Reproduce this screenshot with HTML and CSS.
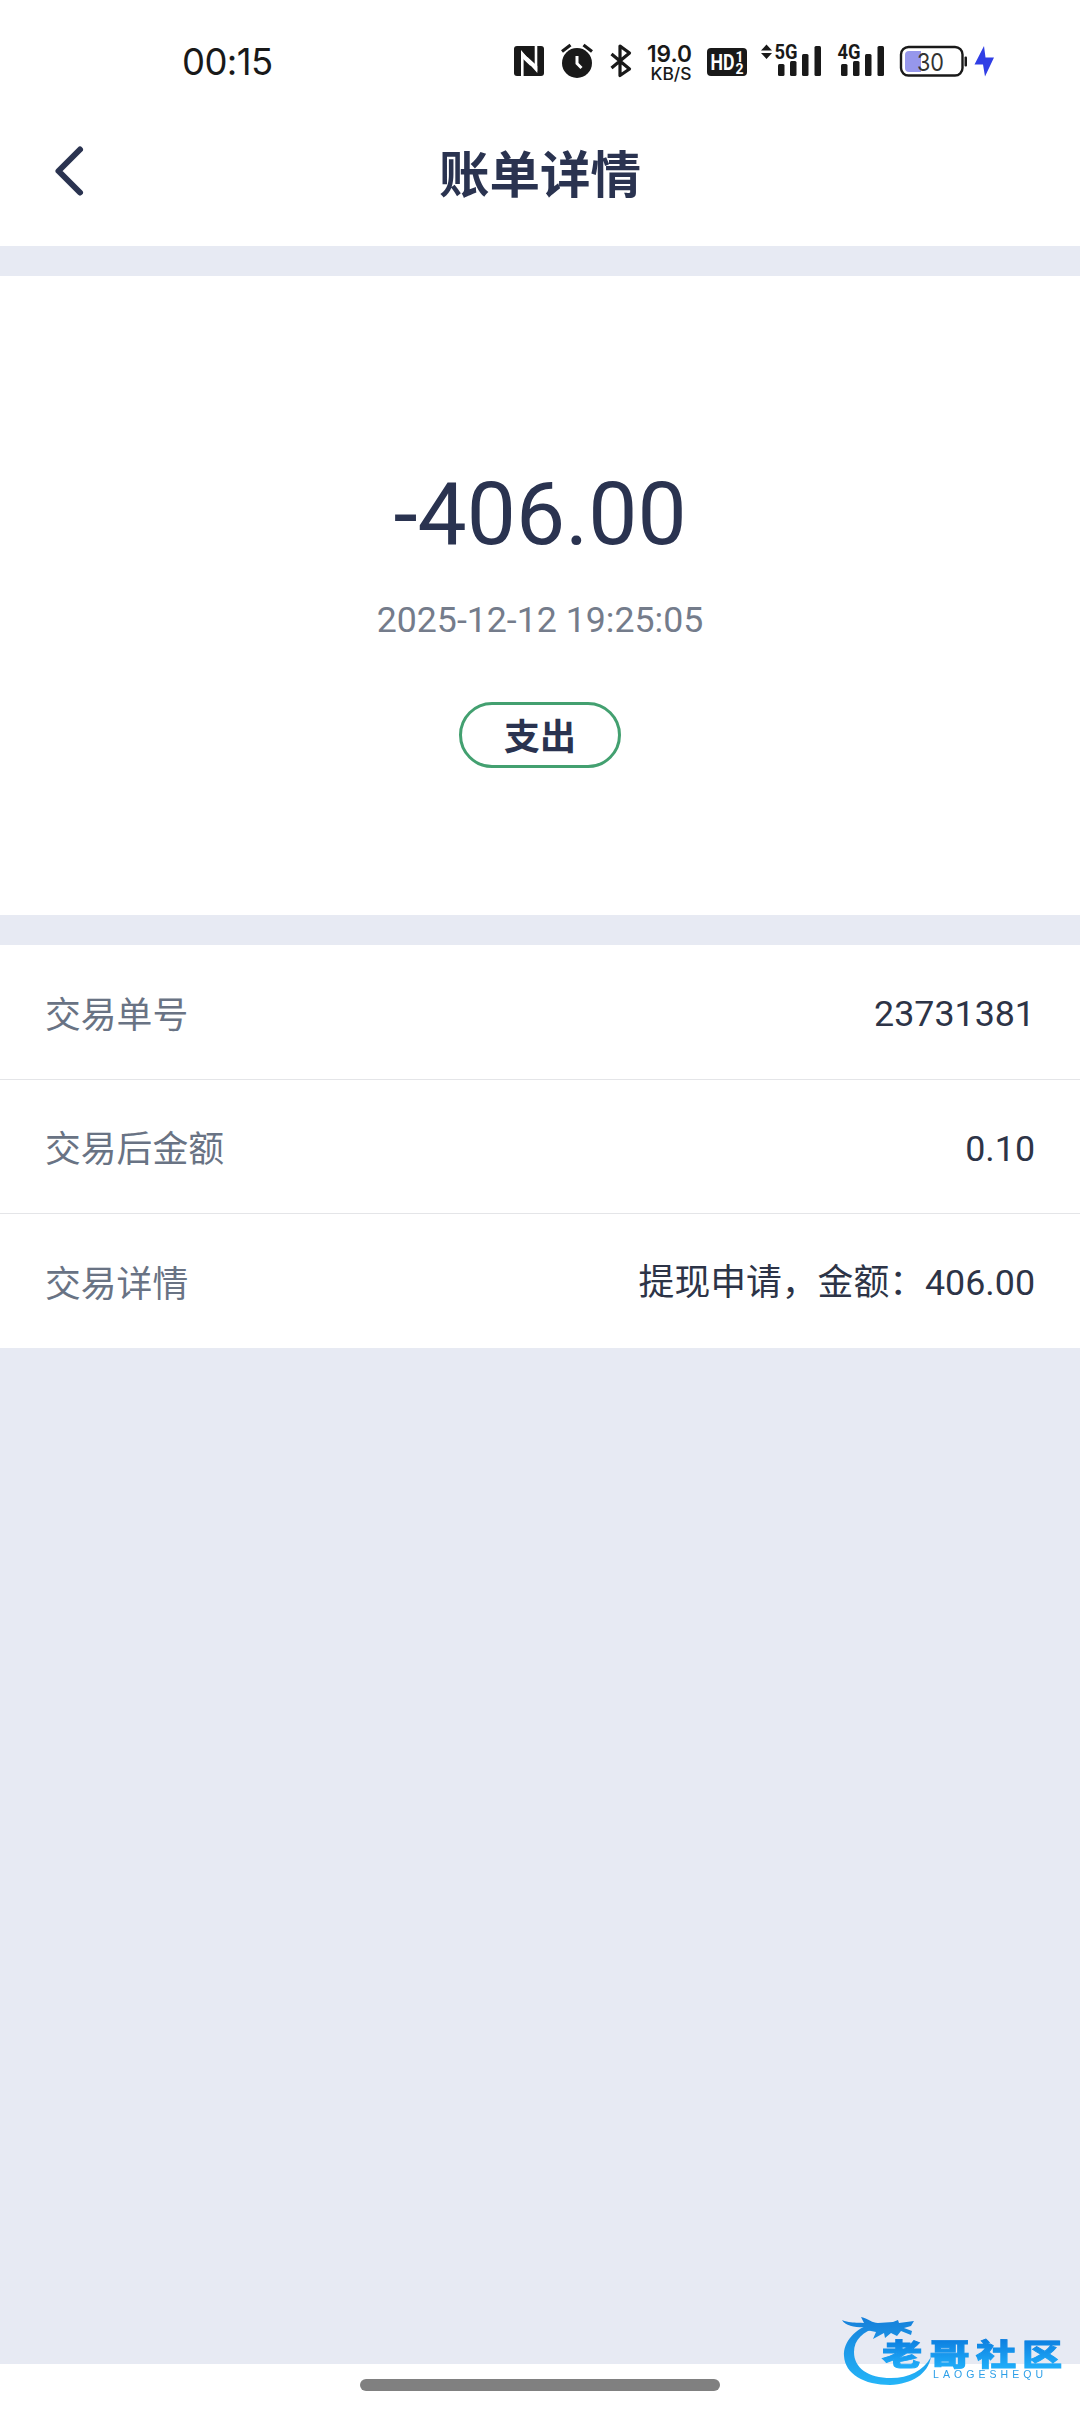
FILE: index.html
```html
<!DOCTYPE html>
<html lang="zh-CN">
<head>
<meta charset="utf-8">
<title>账单详情</title>
<link rel="stylesheet" href="styles.css">
</head>
<body>
<div class="screen">
  <header class="top">
    <div class="status">
      <span class="clock">00:15</span>
      <div class="icons">
        <svg class="nfc" width="30" height="40" viewBox="514 42 30 40"><rect x="514" y="46" width="30" height="30" rx="3" fill="#191919"/><path d="M522.300 76V53.500L530 62.500M536 46V69.500L528 60.500" fill="none" stroke="#fff" stroke-width="2.600"/><path d="M521 51.500L530.500 60V66L521 57zM537.300 71.500L527.500 62.500V57L537.300 66z" fill="#fff"/></svg>
        <svg class="alarm" width="33" height="40" viewBox="560 42 33 40"><circle cx="577" cy="63" r="15" fill="#191919"/><path d="M562 51.500l8.500-6.500M592 51.500l-8.500-6.500" stroke="#191919" stroke-width="3.200"/><path d="M577 56v7.500l4.500 4.500" fill="none" stroke="#fff" stroke-width="3"/></svg>
        <svg class="bluetooth" width="22" height="40" viewBox="610 42 22 40"><path d="M611.500 54L629.500 69 620 75.500V46L629.500 53 611.500 68" fill="none" stroke="#191919" stroke-width="3.200" stroke-linejoin="round"/></svg>
        <svg class="speed" width="46" height="52" viewBox="647 36 46 52"><text x="647" y="62" class="speed-num" textLength="45" lengthAdjust="spacingAndGlyphs">19.0</text><text x="650.500" y="79.500" class="speed-unit" textLength="41" lengthAdjust="spacingAndGlyphs">KB/S</text></svg>
        <svg class="hd" width="40" height="40" viewBox="707 42 40 40"><rect x="707" y="48" width="40" height="28" rx="4" fill="#191919"/><text x="710.500" y="70" class="hd-text" textLength="24" lengthAdjust="spacingAndGlyphs">HD</text><text x="735.500" y="61.500" class="hd-num">1</text><text x="735.500" y="73.500" class="hd-num">2</text></svg>
        <svg class="sig5" width="61" height="52" viewBox="761 36 61 52"><path d="M761 50.500l5.500-6 5.500 6zM761 53l5.500 6 5.500-6z" fill="#191919"/><text x="774.500" y="59" class="net" textLength="23" lengthAdjust="spacingAndGlyphs">5G</text><g fill="#191919"><rect x="778" y="64" width="6.500" height="12" rx="1.500"/><rect x="790" y="61" width="6.500" height="15" rx="1.500"/><rect x="802" y="54" width="6.500" height="22" rx="1.500"/><rect x="814.500" y="46" width="6.500" height="30" rx="1.500"/></g></svg>
        <svg class="sig4" width="48" height="52" viewBox="837 36 48 52"><text x="837.500" y="59" class="net" textLength="23" lengthAdjust="spacingAndGlyphs">4G</text><g fill="#191919"><rect x="841" y="64" width="6.500" height="12" rx="1.500"/><rect x="853" y="61" width="6.500" height="15" rx="1.500"/><rect x="865" y="54" width="6.500" height="22" rx="1.500"/><rect x="877.500" y="46" width="6.500" height="30" rx="1.500"/></g></svg>
        <svg class="battery" width="68" height="40" viewBox="899 42 68 40"><rect x="901" y="47" width="61.500" height="28.500" rx="7.500" fill="#fff" stroke="#191919" stroke-width="2.400"/><path d="M909 51h12v21h-12a4 4 0 0 1-4-4V55a4 4 0 0 1 4-4z" fill="#9697ec"/><rect x="964.500" y="56.500" width="2.500" height="10" rx="1" fill="#191919"/><text x="917" y="70.500" class="level" textLength="27" lengthAdjust="spacingAndGlyphs">30</text></svg>
        <svg class="bolt" width="20" height="40" viewBox="974 42 20 40"><path d="M984 46L974.500 64.500H983L985 76.500 994 57.500H985.500z" fill="#303ee5"/></svg>
      </div>
    </div>
    <div class="nav">
      <svg class="back" width="40" height="60" viewBox="0 0 40 60"><path d="M32 8.500L10.500 30 32 51.500" fill="none" stroke="#2a3350" stroke-width="6" stroke-linecap="round" stroke-linejoin="round"/></svg>
      <h1 class="title">账单详情</h1>
    </div>
  </header>
  <section class="summary">
    <div class="amount">-406.00</div>
    <div class="date">2025-12-12 19:25:05</div>
    <div class="badge">支出</div>
  </section>
  <section class="details">
    <div class="row"><span class="label">交易单号</span><span class="value number">23731381</span></div>
    <div class="row"><span class="label">交易后金额</span><span class="value number">0.10</span></div>
    <div class="row"><span class="label">交易详情</span><span class="value note">提现申请，金额：406.00</span></div>
  </section>
  <footer class="home"><div class="home-bar"></div></footer>
  <svg class="watermark" width="230" height="80" viewBox="838 2312 230 80">
    <defs>
      <linearGradient id="ring" gradientUnits="userSpaceOnUse" x1="0" y1="2318" x2="0" y2="2385"><stop offset="0" stop-color="#1680da"/><stop offset="1" stop-color="#25b5f8"/></linearGradient>
      <linearGradient id="word" gradientUnits="userSpaceOnUse" x1="0" y1="-25" x2="0" y2="3"><stop offset="0" stop-color="#0d7fe0"/><stop offset="1" stop-color="#20adf9"/></linearGradient>
    </defs>
    <path d="M874 2323C855 2328 843 2342 844 2356C845 2374 864 2385 890 2385C912 2384 928 2374 931 2357C923 2371 909 2378 891 2378C868 2378 854 2368 854 2352C854 2340 863 2331 877 2328z" fill="url(#ring)"/>
    <path d="M842 2320C852 2324 858 2322 864 2323L861 2317C869 2319 872 2323 878 2323L893 2322 898 2320 899 2323 914 2321 911 2326 904 2328 912 2331 911 2335 901 2331 897 2336 891 2333 885 2338 884 2333 873 2339 876 2332 866 2330 871 2327C859 2328 846 2327 842 2320z" fill="url(#ring)"/>
    <g fill="url(#word)" stroke="url(#word)" stroke-width=".9">
      <text class="wm" transform="translate(882 2364.500) scale(1.340 1)">老</text>
      <text class="wm" transform="translate(929.500 2364.500) scale(1.340 1)">哥</text>
      <text class="wm" transform="translate(976 2364.500) scale(1.340 1)">社</text>
      <text class="wm" transform="translate(1022 2364.500) scale(1.340 1)">区</text>
    </g>
    <text x="933" y="2378" class="wm-sub" textLength="110">LAOGESHEQU</text>
  </svg>
</div>
</body>
</html>
```
FILE: styles.css
```css
* { box-sizing: border-box; }
body { margin: 0; font-family: Roboto, "Noto Sans CJK SC", sans-serif; color: #2a3350; }
.screen { position: relative; width: 1080px; height: 2412px; display: flex; flex-direction: column; background: #e7eaf3; overflow: hidden; }
.top { height: 246px; background: #fff; }
.status { height: 102px; padding: 36px 86px 0 182px; display: flex; justify-content: space-between; align-items: flex-start; }
.clock { font: 400 36.500px/52px Inter, sans-serif; letter-spacing: -.6px; color: #191919; }
.icons { display: flex; align-items: center; }
.icons svg { display: block; flex: none; }
.alarm { margin-left: 16px; }
.bluetooth { margin-left: 17px; }
.speed { margin-left: 15px; }
.hd { margin-left: 14px; }
.sig5 { margin-left: 14px; }
.sig4 { margin-left: 15px; }
.battery { margin-left: 14px; }
.bolt { margin-left: 7px; }
.speed-num { font: 600 23px Inter, sans-serif; fill: #191919; }
.speed-unit { font: 500 17px Inter, sans-serif; fill: #191919; }
.hd-text { font: 700 22px Roboto, sans-serif; fill: #fff; }
.hd-num { font: 700 14px Roboto, sans-serif; fill: #fff; }
.net { font: 700 20px Roboto, sans-serif; fill: #191919; }
.level { font: 400 24px Inter, sans-serif; fill: #333; }
.nav { height: 144px; padding: 39px 48px 0; display: grid; grid-template-columns: 40px 1fr 40px; align-items: start; }
.title { margin: 0; padding-top: 1px; text-align: center; font-size: 50.500px; line-height: 68px; font-weight: 700; }
.summary { height: 639px; margin-top: 30px; padding-top: 183px; background: #fff; display: flex; flex-direction: column; align-items: center; }
.amount { font-size: 87.500px; line-height: 110px; }
.date { margin-top: 25px; font-size: 35.700px; line-height: 52px; color: #747c8b; }
.badge { width: 162px; height: 66px; margin-top: 56px; border: 3px solid #43a070; border-radius: 33px; text-align: center; font-size: 36px; line-height: 66px; font-weight: 700; }
.details { margin-top: 30px; background: #fff; }
.row { height: 134px; padding: 0 45px 1px; display: flex; justify-content: space-between; align-items: center; font-size: 35.800px; }
.row + .row { border-top: 1px solid #e4e5e8; }
.row:last-child { height: 135px; }
.label { color: #697384; }
.value { color: #2d3447; }
.number { padding-top: 5px; }
.note { padding-bottom: 3px; }
.home { height: 48px; margin-top: auto; padding-top: 15px; background: #fff; }
.home-bar { width: 360px; height: 12px; margin: 0 auto; border-radius: 6px; background: #808080; }
.watermark { position: absolute; left: 838px; top: 2312px; filter: blur(.5px); }
.wm { font: 900 30px "Noto Sans CJK SC", sans-serif; }
.wm-sub { font: 400 10.500px "Liberation Sans", sans-serif; fill: #2c9fe8; }
```
